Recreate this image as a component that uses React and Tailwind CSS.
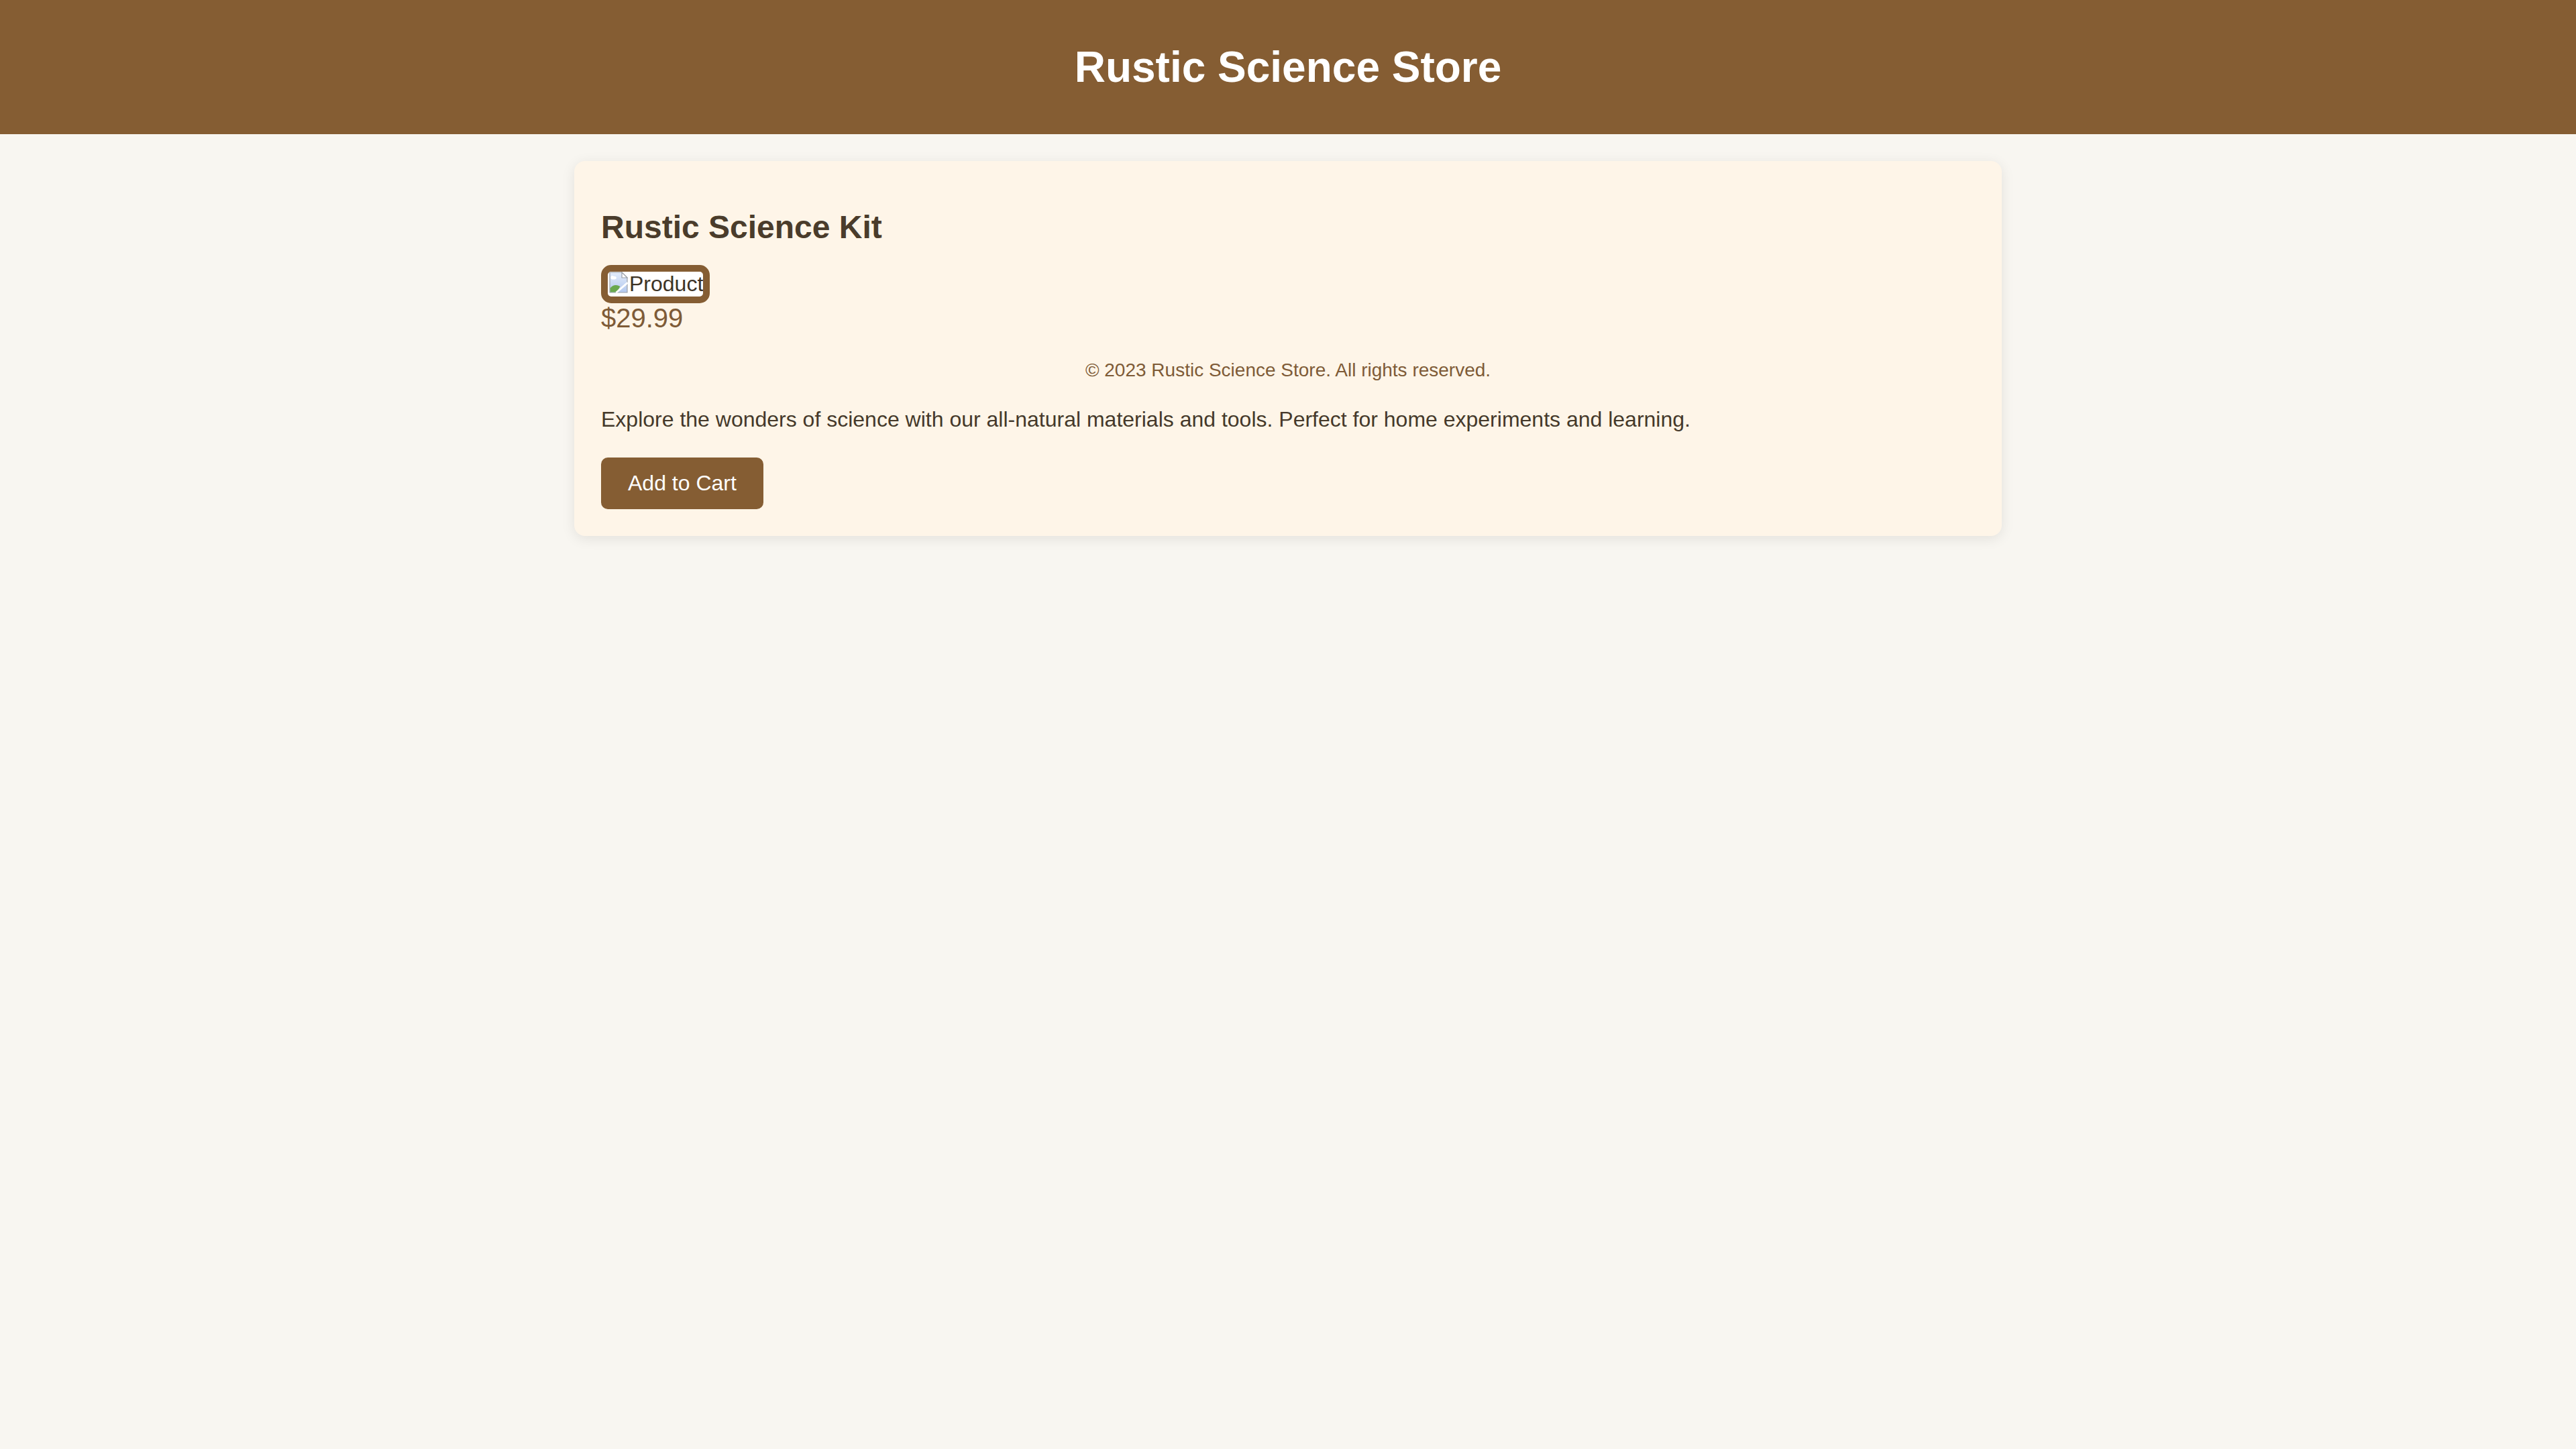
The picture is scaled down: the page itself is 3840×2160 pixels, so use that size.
import React from 'react';

// Icono de imagen rota (como el que pinta el navegador cuando falla un <img>)
function BrokenImageIcon() {
  return (
    <svg width="32" height="32" viewBox="0 0 16 16" className="block shrink-0">
      <defs>
        <linearGradient id="sky" x1="0" y1="0" x2="0" y2="1">
          <stop offset="0" stopColor="#e3ecfb" />
          <stop offset="1" stopColor="#b3c8ee" />
        </linearGradient>
      </defs>
      <path d="M1.5 0.5 H10.5 L14.5 4.5 V15.5 H1.5 Z" fill="url(#sky)" stroke="#9a9fa8" strokeWidth="0.6" />
      <path d="M10.5 0.5 V4.5 H14.5 Z" fill="#ffffff" stroke="#9a9fa8" strokeWidth="0.6" />
      <ellipse cx="4.3" cy="4.6" rx="2.1" ry="1.2" fill="#ffffff" />
      <ellipse cx="3.4" cy="4" rx="1.1" ry="1" fill="#ffffff" />
      <path d="M1.8 15.2 V12.2 Q5 8.6 9.2 11 L6.8 15.2 Z" fill="#6aa84f" />
      <path d="M6.2 15.6 L14.8 8.2" stroke="#ffffff" strokeWidth="1.4" />
    </svg>
  );
}

export default function App() {
  return (
    <div className="min-h-screen bg-[#f8f6f1] font-['Liberation_Sans',Arial,sans-serif] leading-[normal]">
      {/* Cabecera */}
      <header className="h-[200px] bg-[#855d33] flex items-center justify-center">
        <h1 className="text-[64px] font-bold text-white leading-[normal]">Rustic Science Store</h1>
      </header>

      {/* Tarjeta del producto */}
      <main className="pt-[40px]">
        <div className="mx-auto w-[2128px] bg-[#fef5e8] rounded-[16px] shadow-[0_4px_20px_rgba(0,0,0,0.09)] px-[40px] pt-[71px] pb-[40px]">
          <h2 className="text-[48px] font-bold text-[#4a3c2b] leading-[normal]">Rustic Science Kit</h2>

          <div className="mt-[29px] flex">
            <div className="h-[57px] w-[162px] border-[10px] border-[#855d33] rounded-[15px] bg-white overflow-hidden flex items-start">
              <BrokenImageIcon />
              <span className="text-[32px] text-[#3d3326] leading-[normal] whitespace-nowrap">Product</span>
            </div>
          </div>

          <p className="text-[40px] text-[#7e5b37] leading-[normal]">$29.99</p>

          <p className="mt-[39px] text-[28px] text-[#7e5b37] text-center leading-[normal]">
            © 2023 Rustic Science Store. All rights reserved.
          </p>

          <p className="mt-[39px] text-[32px] text-[#45392a] leading-[normal]">
            Explore the wonders of science with our all-natural materials and tools. Perfect for home experiments and learning.
          </p>

          <button className="mt-[38px] bg-[#855d33] text-white text-[32px] leading-[normal] px-[40px] py-[20px] rounded-[10px]">
            Add to Cart
          </button>
        </div>
      </main>
    </div>
  );
}
